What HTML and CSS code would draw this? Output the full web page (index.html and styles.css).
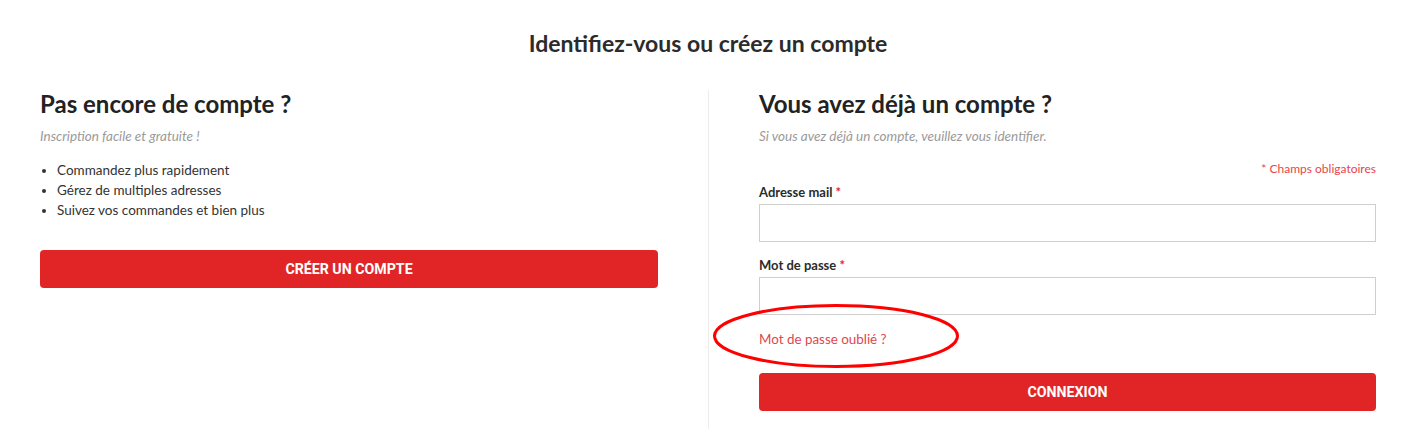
FILE: index.html
```html
<!DOCTYPE html>
<html lang="fr">
<head>
<meta charset="utf-8">
<title>Identifiez-vous ou créez un compte</title>
<link rel="stylesheet" href="styles.css">
</head>
<body>
<main class="page">
  <h1 class="page-title">Identifiez-vous ou créez un compte</h1>
  <div class="columns">
    <section class="col col-left">
      <h2 class="col-title">Pas encore de compte ?</h2>
      <p class="col-sub">Inscription facile et gratuite !</p>
      <ul class="perks">
        <li>Commandez plus rapidement</li>
        <li>Gérez de multiples adresses</li>
        <li>Suivez vos commandes et bien plus</li>
      </ul>
      <button class="btn btn-create" type="button">CRÉER UN COMPTE</button>
    </section>
    <section class="col col-right">
      <h2 class="col-title">Vous avez déjà un compte ?</h2>
      <p class="col-sub">Si vous avez déjà un compte, veuillez vous identifier.</p>
      <p class="required-note">* Champs obligatoires</p>
      <form class="login-form">
        <label class="field-label" for="email">Adresse mail <span class="star">*</span></label>
        <input class="field-input" id="email" type="email">
        <label class="field-label label-pass" for="pass">Mot de passe <span class="star">*</span></label>
        <input class="field-input" id="pass" type="password">
        <div class="forgot-wrap">
          <a class="forgot" href="#">Mot de passe oublié ?</a>
          <svg class="annot" width="248" height="66" viewBox="0 0 248 66" aria-hidden="true">
            <ellipse cx="124" cy="33" rx="121.5" ry="30.5" fill="none" stroke="#ff0000" stroke-width="3"/>
          </svg>
        </div>
        <button class="btn btn-login" type="button">CONNEXION</button>
      </form>
    </section>
  </div>
</main>
</body>
</html>
```

FILE: styles.css
```css
* { box-sizing: border-box; }
body {
  margin: 0;
  background: #fff;
  font-family: "Lato", "Open Sans", sans-serif;
  color: #333;
}
.page {
  padding: 28px 41px 0 40px;
}
.page-title {
  margin: 0 0 32px;
  text-align: center;
  font-size: 23px;
  line-height: 30px;
  font-weight: 700;
  color: #2b2b2b;
}
.columns {
  display: grid;
  grid-template-columns: 668px 1fr;
}
.col-left {
  padding-right: 50px;
}
.col-right {
  border-left: 1px solid #ececec;
  padding-left: 50px;
  padding-bottom: 18px;
}
.col-title {
  margin: 0;
  font-size: 24px;
  line-height: 28px;
  font-weight: 700;
  color: #222;
}
.col-sub {
  margin: 9px 0 0;
  font-size: 13.5px;
  line-height: 18px;
  font-style: italic;
  color: #9a9a9a;
}
.perks {
  margin: 15px 0 0;
  padding-left: 17px;
  font-size: 13.5px;
  line-height: 20px;
  color: #333;
}
.btn {
  display: block;
  width: 100%;
  height: 38px;
  border: 0;
  border-radius: 4px;
  background: #e12526;
  color: #fff;
  font-family: "Roboto", sans-serif;
  font-weight: 700;
  font-size: 14.2px;
  cursor: pointer;
}
.btn-create { margin-top: 30px; }
.required-note {
  margin: 16px 0 0;
  text-align: right;
  font-size: 12px;
  line-height: 16px;
  color: #e8454a;
}
.login-form {
  display: flex;
  flex-direction: column;
}
.field-label {
  margin-top: 7px;
  font-size: 13px;
  line-height: 16px;
  font-weight: 700;
  color: #2b2b2b;
}
.label-pass { margin-top: 15px; }
.star { color: #e12526; }
.field-input {
  margin-top: 4px;
  height: 38px;
  border: 1px solid #cfcfcf;
  border-radius: 0;
  padding: 0 10px;
  font: inherit;
}
.forgot-wrap {
  position: relative;
  margin-top: 13px;
  height: 18px;
}
.forgot {
  font-size: 13.4px;
  line-height: 18px;
  color: #e0474c;
  text-decoration: none;
}
.annot {
  position: absolute;
  left: -47px;
  top: -25px;
  pointer-events: none;
}
.btn-login { margin-top: 27px; }
```
